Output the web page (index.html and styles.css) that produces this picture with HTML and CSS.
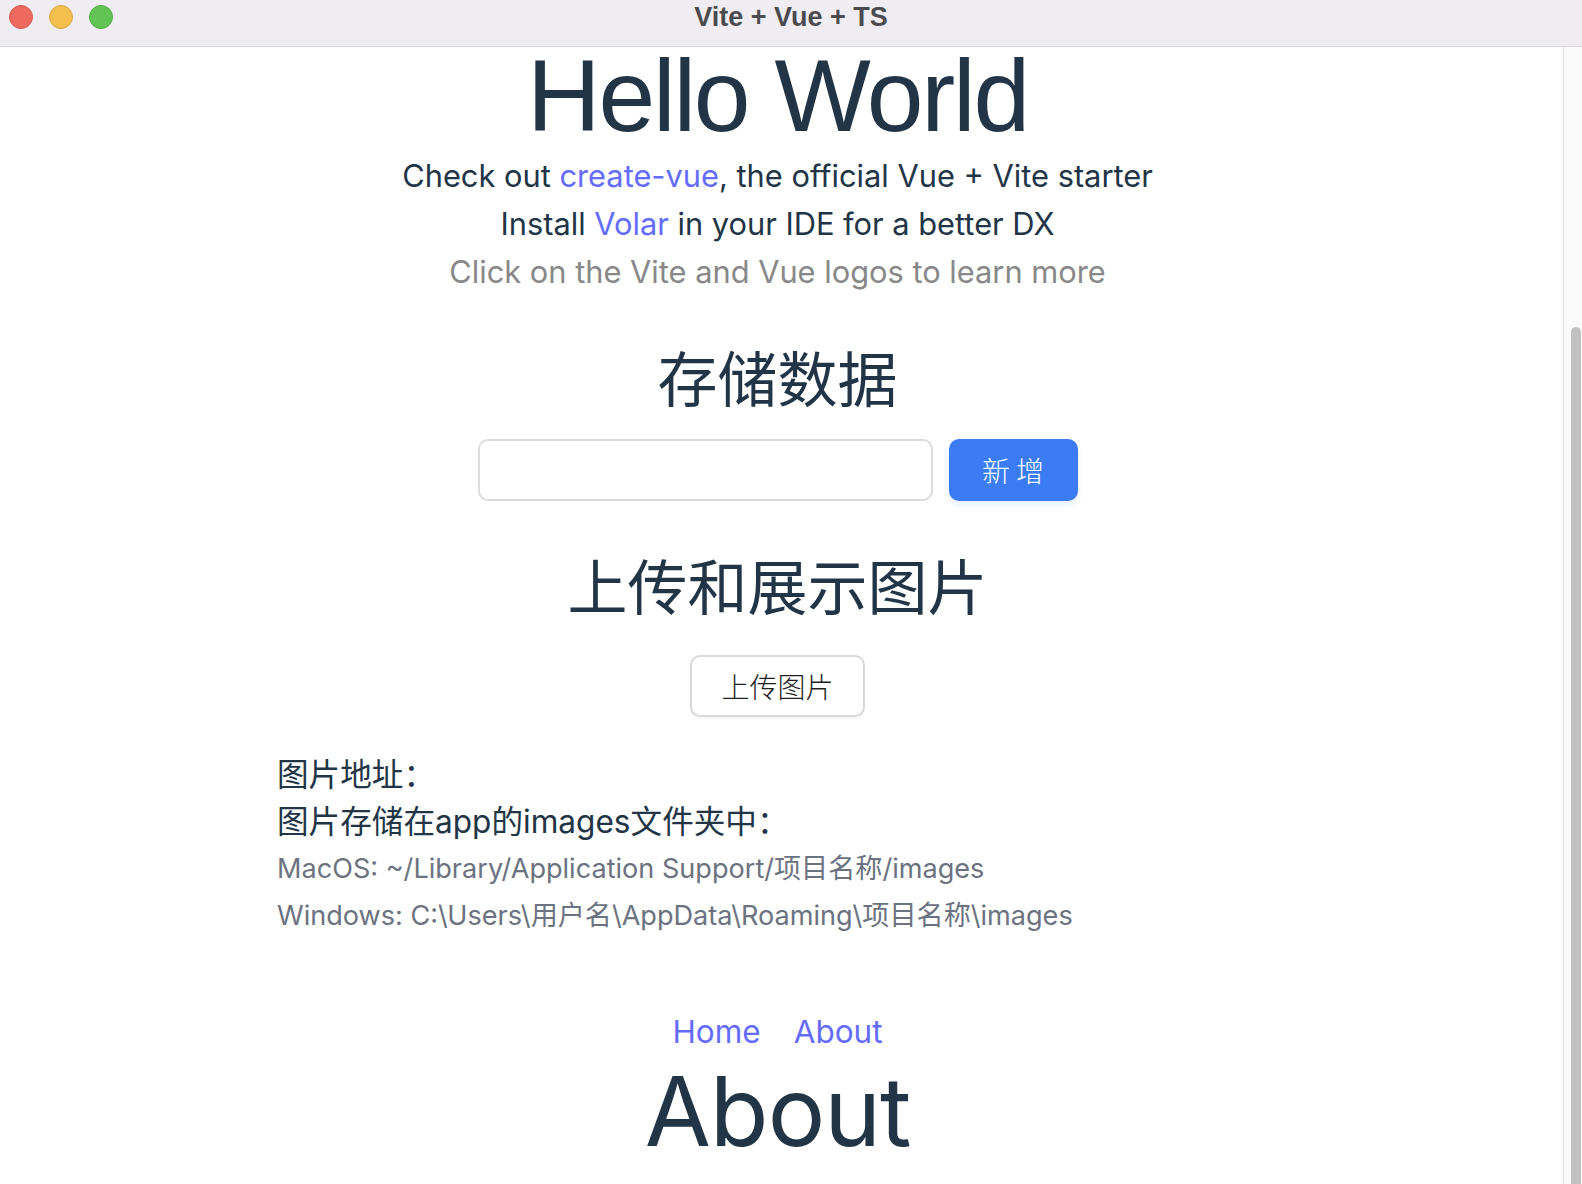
FILE: index.html
```html
<!DOCTYPE html>
<html lang="zh-CN">
<head>
<meta charset="utf-8">
<title>Vite + Vue + TS</title>
<link rel="stylesheet" href="styles.css">
</head>
<body>
<div class="window">
  <header class="titlebar">
    <div class="lights">
      <span class="light red"></span>
      <span class="light yellow"></span>
      <span class="light green"></span>
    </div>
    <div class="title">Vite + Vue + TS</div>
    <div class="spacer"></div>
  </header>
  <div class="viewport">
    <main class="page">
      <h1 class="hello">Hello World</h1>
      <p class="line">Check out <a class="link" href="#">create-vue</a>, the official Vue + Vite starter</p>
      <p class="line">Install <a class="link" href="#">Volar</a> in your IDE for a better DX</p>
      <p class="line muted">Click on the Vite and Vue logos to learn more</p>

      <h2 class="section-title store-title">存储数据</h2>
      <div class="store-row">
        <input class="text-input" type="text">
        <button class="btn-primary">新 增</button>
      </div>

      <h2 class="section-title upload-title">上传和展示图片</h2>
      <button class="btn-default">上传图片</button>

      <div class="info">
        <div class="info-line">图片地址：</div>
        <div class="info-line">图片存储在app的images文件夹中：</div>
        <div class="info-path">MacOS: ~/Library/Application Support/项目名称/images</div>
        <div class="info-path">Windows: C:\Users\用户名\AppData\Roaming\项目名称\images</div>
      </div>

      <nav class="nav">
        <a class="link" href="#">Home</a>
        <a class="link" href="#">About</a>
      </nav>
      <h1 class="about">About</h1>
    </main>
    <div class="scrollbar"><div class="thumb"></div></div>
  </div>
</div>
</body>
</html>
```

FILE: styles.css
```css
html, body {
  margin: 0;
  padding: 0;
  height: 100%;
  overflow: hidden;
  background: #ffffff;
}

.window {
  height: 100vh;
  display: flex;
  flex-direction: column;
  font-family: Inter, "Noto Sans CJK SC", sans-serif;
  color: #213547;
}

.titlebar {
  flex: none;
  background: #efedf1;
  border-bottom: 1px solid #d9d7dc;
  display: grid;
  grid-template-columns: 1fr auto 1fr;
  align-items: start;
  padding-top: 5px;
  box-sizing: content-box;
  height: 41px;
}

.lights {
  display: flex;
  gap: 16px;
  padding-left: 9px;
}

.light {
  width: 24px;
  height: 24px;
  border-radius: 50%;
  box-sizing: border-box;
}
.red { background: #ee6a5f; border: 1px solid #d95a50; }
.yellow { background: #f5bf4f; border: 1px solid #dca843; }
.green { background: #61c454; border: 1px solid #51ad45; }

.title {
  font-family: "Liberation Sans", Arial, sans-serif;
  font-weight: 700;
  font-size: 27px;
  line-height: 24px;
  color: #4b4b4f;
}

.viewport {
  flex: 1;
  display: flex;
  overflow: hidden;
}

.page {
  flex: 1;
  text-align: center;
  min-width: 0;
  padding-right: 8px;
}

.hello {
  font-family: "Liberation Sans", Arial, sans-serif;
  font-weight: 400;
  font-size: 102px;
  letter-spacing: -2.2px;
  line-height: 98px;
  margin: 0 0 7px;
  color: #213547;
}

.line {
  margin: 0;
  font-size: 30.8px;
  line-height: 48px;
}

.muted { color: #888888; }

.link {
  color: #646cff;
  text-decoration: none;
}

.section-title {
  font-family: "Noto Sans CJK SC", sans-serif;
  font-weight: 400;
  font-size: 60px;
  line-height: 80px;
  margin: 0;
  color: #213547;
}
.store-title { margin-top: 40px; }
.store-row { margin-top: 23px; }
.upload-title { margin-top: 43px; }

.store-row {
  display: flex;
  justify-content: center;
  gap: 16px;
}

.text-input {
  width: 455px;
  height: 62px;
  box-sizing: border-box;
  border: 2px solid #dcdcdc;
  border-radius: 10px;
  background: #fff;
  margin: 0;
  outline: none;
}

.btn-primary {
  width: 129px;
  height: 62px;
  border: none;
  border-radius: 10px;
  background: #3b7cf5;
  color: #ffffff;
  font-family: "Noto Sans CJK SC", sans-serif;
  font-weight: 300;
  font-size: 28px;
  margin: 0;
  padding: 0;
  box-shadow: 0 4px 6px rgba(59, 124, 245, 0.12);
}

.btn-default {
  display: block;
  margin: 31px auto 0;
  width: 175px;
  height: 62px;
  border: 2px solid #d9d9d9;
  border-radius: 10px;
  background: #ffffff;
  color: #1f1f1f;
  font-family: "Noto Sans CJK SC", sans-serif;
  font-weight: 300;
  font-size: 28px;
  padding: 0;
  box-shadow: 0 2px 3px rgba(0, 0, 0, 0.04);
}

.info {
  text-align: left;
  padding-left: 277px;
  margin-top: 34px;
}

.info-line {
  font-size: 31.6px;
  line-height: 47px;
  color: #213547;
}

.info-path {
  font-size: 27.1px;
  line-height: 47px;
  color: #6b7280;
}

.nav {
  display: flex;
  justify-content: center;
  gap: 33px;
  font-size: 31.5px;
  line-height: 48px;
  margin-top: 69px;
}

.about {
  font-weight: 400;
  font-size: 96px;
  letter-spacing: -1px;
  line-height: 110px;
  margin: 0;
  color: #213547;
}

.scrollbar {
  flex: none;
  background: #fafafa;
  border-left: 1px solid #e4e4e4;
  padding: 280px 0 0 7px;
  box-sizing: border-box;
  width: 19px;
  display: flex;
}

.thumb {
  width: 10px;
  flex: none;
  background: #c1c1c1;
  border-radius: 5px 5px 0 0;
}
```
